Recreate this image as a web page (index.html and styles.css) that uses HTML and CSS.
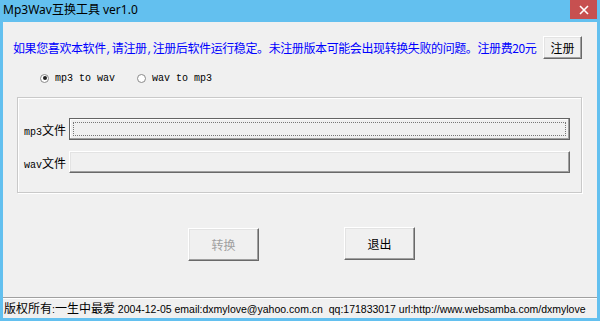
FILE: index.html
```html
<!DOCTYPE html>
<html lang="zh-CN">
<head>
    <meta charset="UTF-8">
    <title>Mp3Wav互换工具 ver1.0</title>
    <link rel="stylesheet" href="styles.css">
</head>
<body>
    <div class="window">
        <div class="titlebar">
            <span class="title">Mp3Wav互换工具 ver1.0</span>
            <span class="close">
                <svg width="10" height="10" viewBox="0 0 10 10"><path d="M1 1 L9 9 M9 1 L1 9" stroke="#fff" stroke-width="1.6"/></svg>
            </span>
        </div>

        <div class="client">
            <div class="notice-row">
                <span class="notice">如果您喜欢本软件<span class="lat">,</span>请注册<span class="lat">,</span>注册后软件运行稳定。未注册版本可能会出现转换失败的问题。注册费20元</span>
                <button class="btn reg">注册</button>
            </div>

            <div class="radio-row">
                <label class="radio"><span class="dot checked"></span><span class="lat">mp3 to wav</span></label>
                <label class="radio"><span class="dot"></span><span class="lat">wav to mp3</span></label>
            </div>

            <div class="group">
                <div class="file-row">
                    <span class="file-label"><span class="lat">mp3</span>文件</span>
                    <button class="btn field focused"></button>
                </div>
                <div class="file-row">
                    <span class="file-label"><span class="lat">wav</span>文件</span>
                    <button class="btn field"></button>
                </div>
            </div>

            <div class="action-row">
                <button class="btn action disabled">转换</button>
                <button class="btn action">退出</button>
            </div>

            <div class="statusbar"><span class="cjk">版权所有</span>:<span class="cjk">一生中最爱</span> 2004-12-05 email:dxmylove@yahoo.com.cn&nbsp; qq:171833017 url:http://www.websamba.com/dxmylove</div>
        </div>
    </div>
</body>
</html>
```

FILE: styles.css
```css
body {
    margin: 0;
    font-family: "Noto Sans CJK SC", sans-serif;
    font-size: 12px;
}
.window {
    width: 600px;
    height: 321px;
    box-sizing: border-box;
    background: #63c0ef;
    padding: 0 3px 3px 3px;
    display: flex;
    flex-direction: column;
}
.titlebar {
    height: 22px;
    display: flex;
    align-items: flex-start;
    justify-content: space-between;
    flex-shrink: 0;
}
.title {
    color: #000;
    line-height: 22px;
    margin-top: -1px;
    font-family: "Noto Sans", "Noto Sans CJK SC", sans-serif;
    font-size: 12px;
}
.close {
    width: 27px;
    height: 19px;
    background: #c75050;
    display: flex;
    align-items: center;
    justify-content: center;
}
.client {
    flex: 1;
    background: #f0f0f0;
    display: flex;
    flex-direction: column;
}
.lat {
    font-family: "Liberation Mono", monospace;
    font-size: 10px;
}
.notice-row {
    margin-top: 14px;
    height: 22px;
    display: flex;
    align-items: center;
    justify-content: space-between;
    padding: 0 15px 0 10px;
}
.notice {
    color: #0000ff;
    font-size: 12px;
    letter-spacing: -0.4px;
    white-space: nowrap;
}
.notice .lat {
    color: #0000ff;
    letter-spacing: 0;
}
.btn {
    background: #f0f0f0;
    border: 1px solid;
    border-color: #fff #696969 #696969 #fff;
    box-shadow: inset -1px -1px #a0a0a0, inset 1px 1px #e3e3e3;
    font-family: "Noto Sans CJK SC", sans-serif;
    font-size: 12px;
    color: #000;
    padding: 0;
    box-sizing: border-box;
}
.reg {
    width: 39px;
    height: 23px;
    flex-shrink: 0;
}
.radio-row {
    margin-top: 12px;
    height: 16px;
    display: flex;
    align-items: center;
    padding-left: 37px;
    gap: 16px;
}
.radio {
    display: flex;
    align-items: center;
    gap: 6px;
    color: #000;
}
.radio:first-child {
    width: 81px;
}
.dot {
    width: 9px;
    height: 9px;
    border-radius: 50%;
    border: 1px solid #8a8a8a;
    background: #fff;
    box-sizing: border-box;
    position: relative;
}
.dot.checked::after {
    content: "";
    position: absolute;
    left: 1.5px;
    top: 1.5px;
    width: 4px;
    height: 4px;
    border-radius: 50%;
    background: #222;
}
.group {
    margin: 11px 0 0 14px;
    width: 565px;
    height: 96px;
    box-sizing: border-box;
    border: 1px solid #c9c9c9;
    box-shadow: inset 1px 1px #fff, 1px 1px #fff;
    padding: 20px 11px 0 6px;
    display: flex;
    flex-direction: column;
    gap: 11px;
}
.file-row {
    display: flex;
    align-items: center;
    height: 22px;
}
.file-label {
    width: 45px;
    color: #000;
}
.field {
    flex: 1;
    height: 22px;
    position: relative;
}
.field.focused {
    border: 1px solid #646464;
    box-shadow: inset -1px -1px #a0a0a0, inset 1px 1px #fff;
}
.field.focused::after {
    content: "";
    position: absolute;
    inset: 3px;
    border: 1px dotted #777;
}
.action-row {
    margin-top: 34px;
    display: flex;
    padding-left: 185px;
    gap: 85px;
}
.action {
    width: 71px;
    height: 33px;
}
.action.disabled {
    color: #a0a0a0;
    margin-top: 1px;
}
.statusbar {
    margin-top: auto;
    height: 21px;
    box-sizing: border-box;
    border-top: 1px solid #a0a0a0;
    box-shadow: inset 0 1px #fff;
    padding-left: 1px;
    line-height: 20px;
    color: #000;
    font-family: "Liberation Sans", sans-serif;
    font-size: 10.5px;
    white-space: nowrap;
    overflow: hidden;
}
.statusbar .cjk {
    font-family: "Noto Sans CJK SC", sans-serif;
    font-size: 12px;
}
```
